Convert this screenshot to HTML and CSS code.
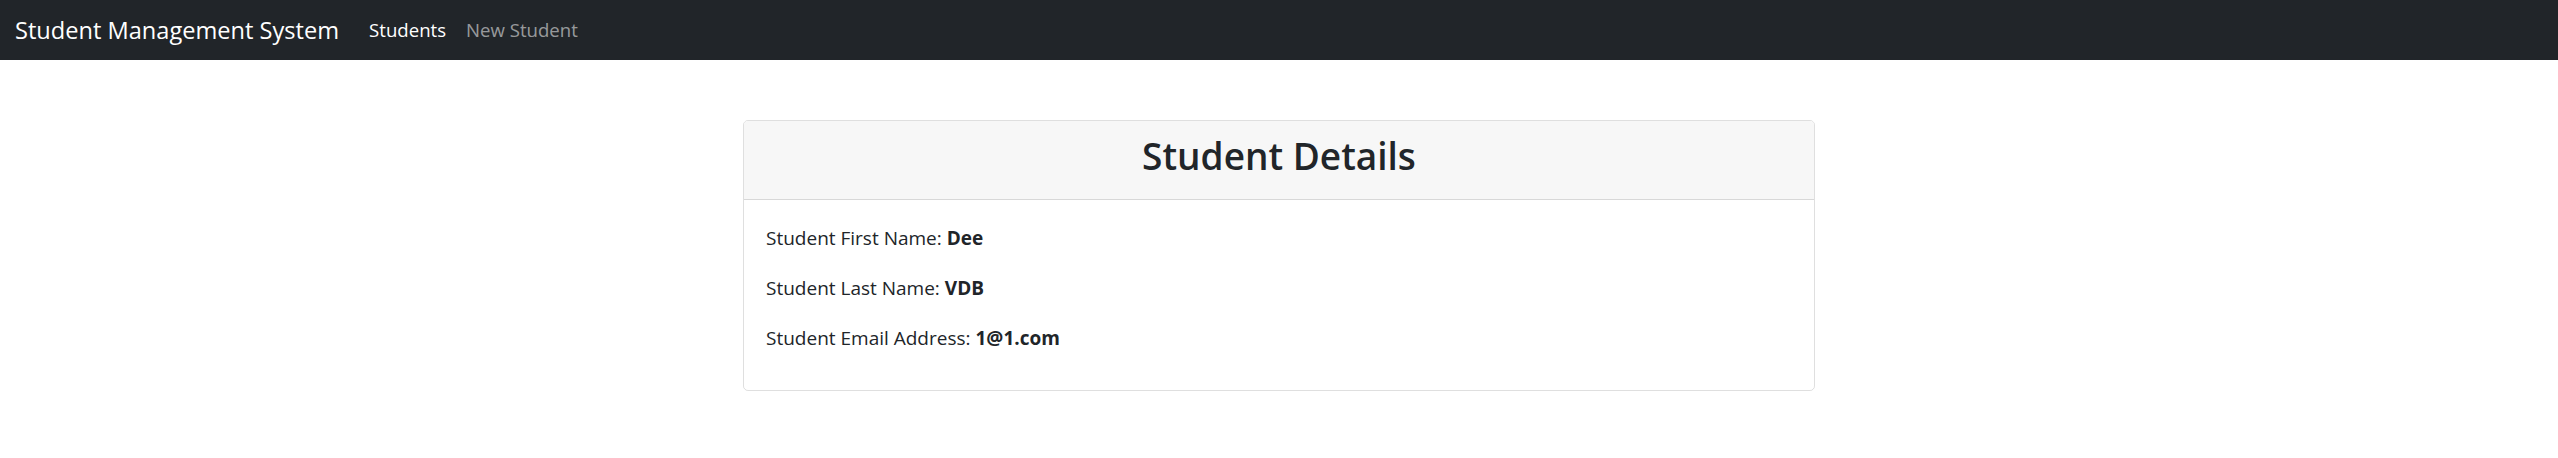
FILE: index.html
```html
<!DOCTYPE html>
<html lang="en">
<head>
<meta charset="utf-8">
<title>Student Management System</title>
<link rel="stylesheet" href="styles.css">
</head>
<body>
<nav class="navbar">
  <a class="brand" href="#">Student Management System</a>
  <ul class="nav">
    <li><a class="nav-link active" href="#">Students</a></li>
    <li><a class="nav-link" href="#">New Student</a></li>
  </ul>
</nav>
<main class="main">
  <div class="card">
    <div class="card-header">
      <h2 class="card-title">Student Details</h2>
    </div>
    <div class="card-body">
      <p class="detail">Student First Name: <b>Dee</b></p>
      <p class="detail">Student Last Name: <b>VDB</b></p>
      <p class="detail">Student Email Address: <b>1@1.com</b></p>
    </div>
  </div>
</main>
</body>
</html>
```

FILE: styles.css
```css
* { box-sizing: border-box; }
html, body { margin: 0; padding: 0; }
body {
  font-family: "Open Sans", "Noto Sans", "Liberation Sans", sans-serif;
  font-size: 20px;
  line-height: 1.5;
  color: #212529;
  background: #fff;
}
.navbar {
  display: flex;
  align-items: center;
  height: 60px;
  padding: 0 15px;
  background: #212529;
}
.brand {
  font-size: 23.6px;
  line-height: 36px;
  color: #fff;
  text-decoration: none;
  margin-right: 20px;
  white-space: nowrap;
}
.nav {
  display: flex;
  list-style: none;
  margin: 0;
  padding: 0;
}
.nav-link {
  display: block;
  padding: 0 10px;
  font-size: 18.6px;
  line-height: 30px;
  color: rgba(255, 255, 255, 0.55);
  text-decoration: none;
}
.nav-link.active { color: #fff; }
.main {
  display: flex;
  justify-content: center;
  padding-top: 60px;
}
.card {
  width: 1072px;
  border: 1px solid rgba(0, 0, 0, 0.125);
  border-radius: 5px;
  overflow: hidden;
}
.card-header {
  padding: 11px 20px 9px;
  background: #f7f7f7;
  border-bottom: 1px solid rgba(0, 0, 0, 0.125);
  text-align: center;
}
.card-title {
  margin: 0 0 10px;
  font-size: 37px;
  line-height: 48px;
  font-weight: 600;
}
.card-body { padding: 23px 20px 17px 22px; }
.detail {
  margin: 0 0 20px;
  font-size: 19px;
  line-height: 30px;
}
.detail b { font-weight: 700; }
```
